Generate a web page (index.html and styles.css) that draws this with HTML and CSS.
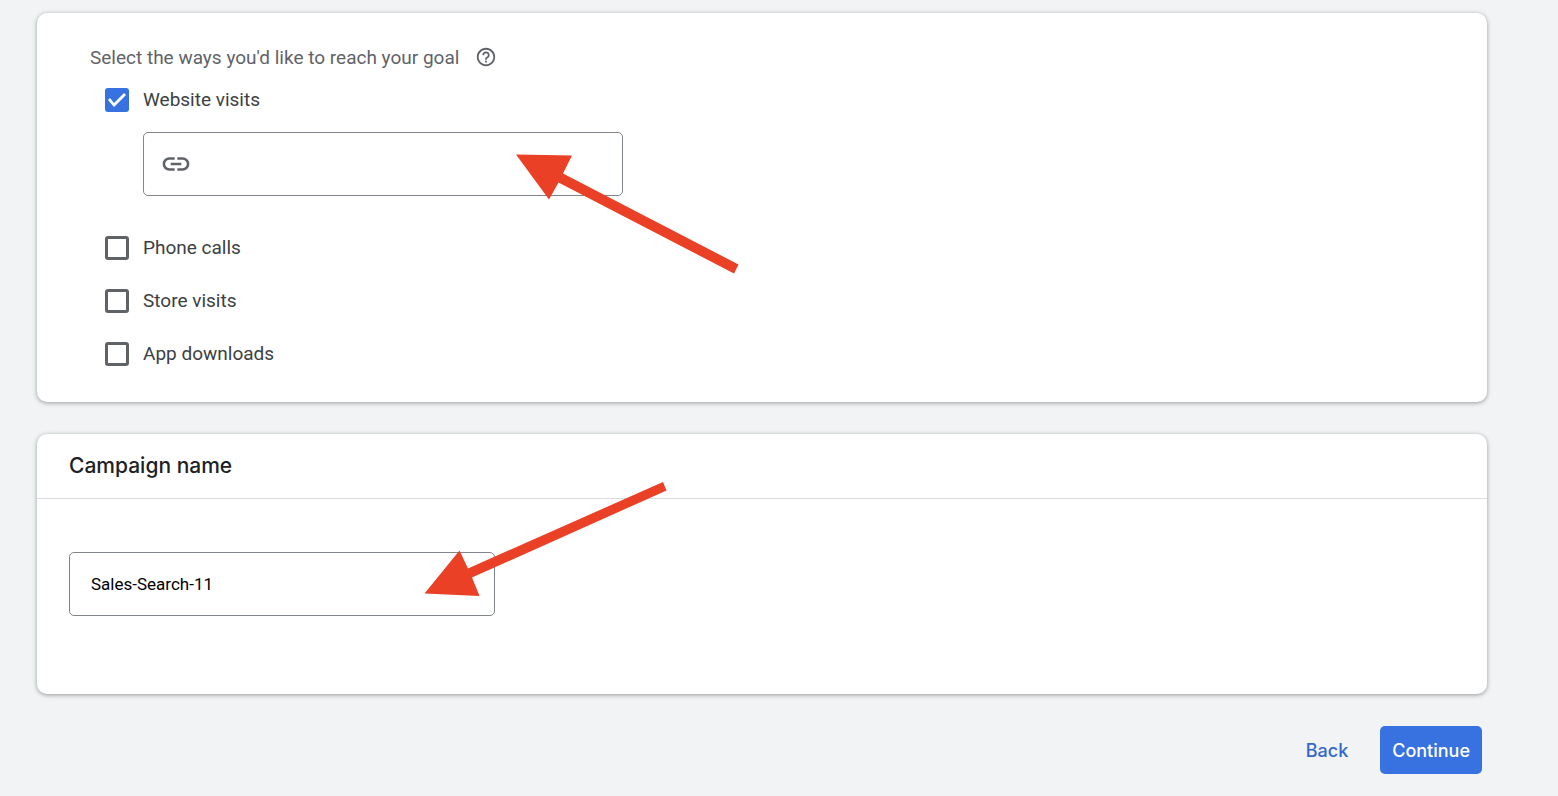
FILE: index.html
```
<!DOCTYPE html>
<html lang="en">
<head>
    <meta charset="UTF-8">
    <meta name="viewport" content="width=device-width, initial-scale=1.0">
    <title>New campaign</title>
    <link rel="stylesheet" href="styles.css">
</head>
<body>
    <main class="page">
        <section class="card goals">
            <div class="goals-title">
                <h2 id="goals-label">Select the ways you'd like to reach your goal</h2>
                <svg class="help-icon" viewBox="0 0 24 24" aria-hidden="true">
                    <path d="M11 18h2v-2h-2v2zm1-16C6.48 2 2 6.48 2 12s4.48 10 10 10 10-4.48 10-10S17.52 2 12 2zm0 18c-4.41 0-8-3.59-8-8s3.59-8 8-8 8 3.59 8 8-3.59 8-8 8zm0-14c-2.21 0-4 1.79-4 4h2c0-1.1.9-2 2-2s2 .9 2 2c0 2-3 1.75-3 5h2c0-2.25 3-2.5 3-5 0-2.21-1.79-4-4-4z"/>
                </svg>
            </div>

            <div class="options" role="group" aria-labelledby="goals-label">
                <label class="option"><input type="checkbox" class="checkbox" checked> Website visits</label>
                <div class="field url-field">
                    <svg class="link-icon" viewBox="0 0 24 24" aria-hidden="true">
                        <path d="M3.9 12c0-1.71 1.39-3.1 3.1-3.1h4V7H7c-2.76 0-5 2.24-5 5s2.24 5 5 5h4v-1.9H7c-1.71 0-3.1-1.39-3.1-3.1zM8 13h8v-2H8v2zm9-6h-4v1.9h4c1.71 0 3.1 1.39 3.1 3.1s-1.39 3.1-3.1 3.1h-4V17h4c2.76 0 5-2.24 5-5s-2.24-5-5-5z"/>
                    </svg>
                    <input type="url" class="field-input" aria-label="Your business's website">
                    <svg class="arrow arrow-url" viewBox="0 0 223 120" aria-hidden="true">
                        <path d="M0 .5 56 1.5 47 19.5 222.5 110.5 218 119.5 42.5 28.5 33 45.5z"/>
                    </svg>
                </div>
                <label class="option"><input type="checkbox" class="checkbox"> Phone calls</label>
                <label class="option"><input type="checkbox" class="checkbox"> Store visits</label>
                <label class="option"><input type="checkbox" class="checkbox"> App downloads</label>
            </div>
        </section>

        <section class="card">
            <h2 class="card-header"><label for="campaign-name">Campaign name</label></h2>
            <div class="card-body">
                <div class="field name-field">
                    <input type="text" class="field-input" id="campaign-name" value="Sales-Search-11">
                    <svg class="arrow arrow-name" viewBox="0 0 243 115" aria-hidden="true">
                        <path d="M.5 111.5 35.5 68.5 44 86.5 239 0 242.5 8.5 48 95.5 55.5 114z"/>
                    </svg>
                </div>
            </div>
        </section>

        <div class="actions">
            <button type="button" class="btn">Back</button>
            <button type="button" class="btn btn-primary">Continue</button>
        </div>
    </main>
</body>
</html>
```
FILE: styles.css
```
* { margin: 0; padding: 0; box-sizing: border-box; }
body {
    font-family: Roboto, "Liberation Sans", sans-serif;
    font-size: 19px;
    line-height: 24px;
    background: #f1f3f4;
    color: #3c4043;
}
.page {
    display: flex;
    flex-direction: column;
    gap: 32px;
    padding: 13px 71px 22px 37px;
}
.card {
    background: white;
    border-radius: 10px;
    box-shadow: 0 1px 4px rgba(60,64,67,0.5);
}

/* Goals */
.goals { padding: 33px 53px 36px; }
.goals-title {
    display: flex;
    align-items: flex-start;
    gap: 16px;
    color: #5f6368;
}
.goals-title h2 {
    font-size: 19px;
    font-weight: 400;
}
.help-icon {
    width: 22px;
    height: 22px;
    fill: #5f6368;
}
.options {
    display: flex;
    flex-direction: column;
    align-items: flex-start;
    gap: 29px;
    padding: 18px 0 0 15px;
}
.option {
    display: flex;
    align-items: center;
    gap: 14px;
    cursor: pointer;
}
.checkbox {
    appearance: none;
    width: 24px;
    height: 24px;
    border: 3px solid #5f6368;
    border-radius: 3px;
    cursor: pointer;
}
.checkbox:checked {
    border: none;
    background: #3871e0;
}
.checkbox:checked::before {
    content: "";
    display: block;
    height: 24px;
    background: white;
    clip-path: polygon(3px 12px, 5px 10px, 9px 15px, 19px 5px, 21px 7px, 9px 19px);
}

/* Outlined inputs */
.field {
    position: relative;
    display: flex;
    align-items: center;
    height: 64px;
    max-width: 100%;
    border: 1px solid #80868b;
    border-radius: 5px;
}
.field-input {
    flex: 1;
    min-width: 0;
    height: 100%;
    border: none;
    outline: none;
    background: transparent;
    font-family: inherit;
    font-size: 17px;
    color: black;
}
.url-field {
    width: 480px;
    margin: -9px 0 11px 38px;
    padding: 0 16px;
    gap: 16px;
}
.link-icon {
    width: 32px;
    height: 32px;
    fill: #5f6368;
}
.name-field {
    width: 426px;
    padding: 0 21px;
}

/* Pointer arrows */
.arrow {
    position: absolute;
    fill: #ea4025;
    pointer-events: none;
}
.arrow-url {
    left: 372px;
    top: 21px;
    width: 223px;
    height: 120px;
}
.arrow-name {
    left: 354px;
    top: -71px;
    width: 243px;
    height: 115px;
}

/* Campaign name */
.card-header {
    padding: 20px 32px;
    border-bottom: 1px solid #dadce0;
    font-family: Inter, Roboto, sans-serif;
    font-size: 21px;
    font-weight: 500;
    color: #202124;
}
.card-body { padding: 53px 32px 78px; }

.actions {
    display: flex;
    justify-content: flex-end;
    gap: 20px;
    padding-right: 5px;
}
.btn {
    height: 48px;
    padding: 0 12px;
    border: none;
    border-radius: 5px;
    background: transparent;
    font-family: Inter, Roboto, sans-serif;
    font-size: 18px;
    font-weight: 500;
    color: #3367c9;
    cursor: pointer;
}
.btn-primary {
    background: #3871e0;
    color: white;
}
```
